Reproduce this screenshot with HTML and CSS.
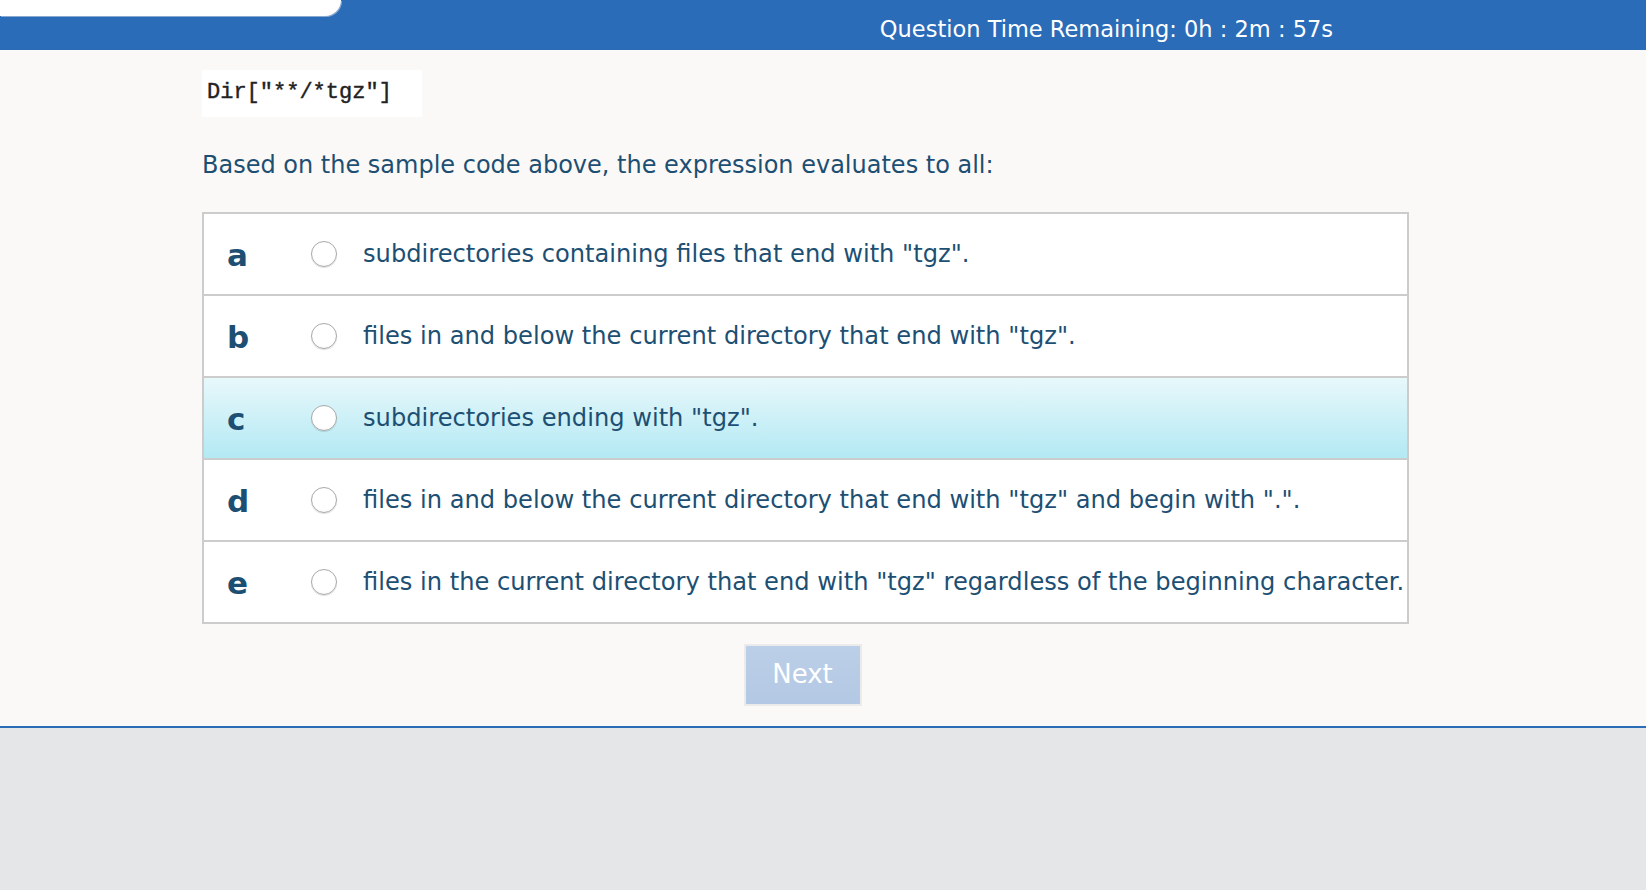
FILE: index.html
```html
<!DOCTYPE html>
<html lang="en">
<head>
<meta charset="utf-8">
<title>Question</title>
<link rel="stylesheet" href="styles.css">
</head>
<body>
<header class="topbar">
  <div class="tab"></div>
  <div class="timer">Question Time Remaining: 0h : 2m : 57s</div>
</header>
<main class="content">
  <div class="code">Dir["**/*tgz"]</div>
  <p class="question">Based on the sample code above, the expression evaluates to all:</p>
  <div class="options">
    <label class="option">
      <span class="letter">a</span>
      <span class="radio"></span>
      <span class="text">subdirectories containing files that end with "tgz".</span>
    </label>
    <label class="option">
      <span class="letter">b</span>
      <span class="radio"></span>
      <span class="text">files in and below the current directory that end with "tgz".</span>
    </label>
    <label class="option hover">
      <span class="letter">c</span>
      <span class="radio"></span>
      <span class="text">subdirectories ending with "tgz".</span>
    </label>
    <label class="option">
      <span class="letter">d</span>
      <span class="radio"></span>
      <span class="text">files in and below the current directory that end with "tgz" and begin with ".".</span>
    </label>
    <label class="option">
      <span class="letter">e</span>
      <span class="radio"></span>
      <span class="text">files in the current directory that end with "tgz" regardless of the beginning character.</span>
    </label>
  </div>
  <div class="actions">
    <button class="next" type="button">Next</button>
  </div>
</main>
<footer class="footer"></footer>
</body>
</html>
```
FILE: styles.css
```css
* { box-sizing: border-box; }
html, body { height: 100%; }
body {
  margin: 0;
  background: #e5e6e8;
  font-family: "DejaVu Sans", Verdana, sans-serif;
  color: #1d4f73;
}
.topbar {
  height: 50px;
  background: #2b6cb9;
  display: flex;
  align-items: flex-start;
}
.tab {
  width: 341px;
  height: 16px;
  background: #ffffff;
  border-bottom-right-radius: 16px;
  box-shadow: 1px 1px 0 rgba(200, 210, 225, 0.6);
}
.timer {
  margin-left: auto;
  padding-right: 313px;
  padding-top: 15px;
  font-family: "DejaVu Sans", Verdana, sans-serif;
  font-size: 22.5px;
  line-height: 28px;
  color: #ffffff;
}
.content {
  background: #faf9f7;
  padding: 20px 0 20px 202px;
  border-bottom: 2px solid #2b6cb9;
}
.code {
  display: inline-block;
  background: #ffffff;
  height: 47px;
  padding: 11px 0 0 5px;
  width: 220px;
  font-family: "Liberation Mono", "Courier New", monospace;
  font-size: 22px;
  line-height: 24px;
  color: #222;
  -webkit-text-stroke: 0.4px #222;
}
.question {
  margin: 33px 0 0;
  font-size: 24px;
  line-height: 30px;
}
.options {
  margin-top: 32px;
  width: 1207px;
  border: 2px solid #cccccc;
  background: #ffffff;
}
.option {
  display: grid;
  grid-template-columns: 107px 26px 1fr;
  align-items: center;
  height: 82px;
  border-top: 2px solid #cccccc;
}
.option:first-child {
  height: 80px;
  border-top: 0;
}
.option.hover {
  background: linear-gradient(#e8f8fb, #b3e9f4);
}
.letter {
  padding-left: 23px;
  font-weight: bold;
  font-size: 31px;
  line-height: 36px;
  padding-top: 2px;
}
.radio {
  width: 26px;
  height: 26px;
  border-radius: 50%;
  border: 1px solid #a8a8a8;
  background: radial-gradient(circle at 50% 40%, #ffffff 60%, #f1f1f1 100%);
  box-shadow: 0 1px 1px rgba(0, 0, 0, 0.12);
}
.text {
  padding-left: 26px;
  font-size: 24.15px;
  line-height: 30px;
  white-space: nowrap;
}
.actions {
  width: 1207px;
  display: flex;
  justify-content: center;
  margin-top: 20px;
  padding-right: 6px;
}
.next {
  width: 118px;
  height: 62px;
  border: 2px solid #ebebeb;
  background: linear-gradient(#bccfe8, #b3c8e4);
  color: #ffffff;
  font-family: "DejaVu Sans", Verdana, sans-serif;
  font-size: 26px;
  padding: 0;
  padding-bottom: 2px;
}
.footer {
  height: 160px;
  background: #e5e6e8;
}
```
